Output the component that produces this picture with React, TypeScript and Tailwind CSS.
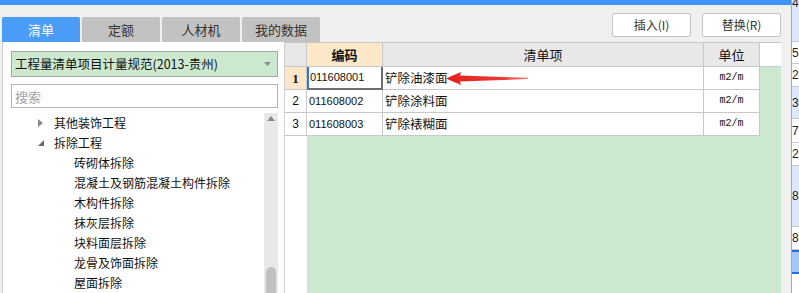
const tabs = ["清单", "定额", "人材机", "我的数据"];

const tree = [
  { label: "其他装饰工程", level: 1, open: false },
  { label: "拆除工程", level: 1, open: true },
  { label: "砖砌体拆除", level: 2 },
  { label: "混凝土及钢筋混凝土构件拆除", level: 2 },
  { label: "木构件拆除", level: 2 },
  { label: "抹灰层拆除", level: 2 },
  { label: "块料面层拆除", level: 2 },
  { label: "龙骨及饰面拆除", level: 2 },
  { label: "屋面拆除", level: 2 },
];

const rows = [
  { code: "011608001", name: "铲除油漆面", unit: "m2/m" },
  { code: "011608002", name: "铲除涂料面", unit: "m2/m" },
  { code: "011608003", name: "铲除裱糊面", unit: "m2/m" },
];

// cut-off cells of the neighbouring sheet on the far right
const strip = [
  { h: "h-[42px]", text: "4", tone: "blue", top: true },
  { h: "h-[22px]", text: "5", tone: "white" },
  { h: "h-[23px]", text: "2", tone: "white" },
  { h: "h-[32px]", text: "3", tone: "blue" },
  { h: "h-[24px]", text: "7", tone: "white" },
  { h: "h-[23px]", text: "2", tone: "white" },
  { h: "h-[61px]", text: "8", tone: "blue" },
  { h: "h-[23px]", text: "8", tone: "white" },
];

function TreeRow({ item }: { item: (typeof tree)[number] }) {
  return (
    <div className="flex h-[20px] items-center">
      {item.level === 1 ? (
        <>
          <span className="ml-[35px] flex w-[16px] items-center">
            {item.open ? (
              <svg width="7" height="7" viewBox="0 0 7 7">
                <polygon points="6,0 6,6 0,6" fill="#6b6b6b" />
              </svg>
            ) : (
              <svg width="6" height="8" viewBox="0 0 6 8">
                <polygon points="0,0 5,4 0,8" fill="#8a8a8a" />
              </svg>
            )}
          </span>
          <span>{item.label}</span>
        </>
      ) : (
        <span className="ml-[71px]">{item.label}</span>
      )}
    </div>
  );
}

export default function App() {
  return (
    <div className="flex h-[293px] w-[799px] overflow-hidden bg-[#f0f0f0] font-['Microsoft_YaHei','Noto_Sans_CJK_SC',sans-serif] text-[12px] leading-none text-[#111]">
      <div className="flex w-[791px] flex-col">
        <div className="h-[5px] bg-[#3f95f6]" />

        <div className="flex h-[37px] pl-[2px] pr-[10px]">
          <div className="flex items-end gap-[2px]">
            {tabs.map((t, i) => (
              <div
                key={t}
                className={`flex h-[25px] w-[78px] items-center justify-center rounded-t-[2px] text-[13px] ${
                  i === 0 ? "bg-[#4b9cf6] text-white" : "bg-[#c2c2c2] text-[#333]"
                }`}
              >
                {t}
              </div>
            ))}
          </div>
          <div className="ml-auto mt-[8px] flex gap-[11px] self-start">
            {["插入(I)", "替换(R)"].map((b) => (
              <div
                key={b}
                className="flex h-[24px] w-[79px] items-center justify-center rounded-[2px] border border-[#c4c4c4] bg-white text-[12px] text-[#333]"
              >
                {b}
              </div>
            ))}
          </div>
        </div>

        <div className="flex min-h-0 flex-1 pl-[2px] pr-[10px]">
          {/* left: spec tree */}
          <div className="flex w-[283px] flex-col border-x border-[#cfcfcf] bg-white">
            <div className="ml-[8px] mt-[9px] flex h-[26px] w-[267px] items-center border border-[#a9a9a9] bg-[#cce8cf] pl-[3px] pr-[6px] text-[12.5px]">
              <span>工程量清单项目计量规范(2013-贵州)</span>
              <svg className="ml-auto" width="7" height="4" viewBox="0 0 7 4">
                <polygon points="0,0 7,0 3.5,4" fill="#8c8c8c" />
              </svg>
            </div>
            <div className="ml-[8px] mt-[7px] flex h-[24px] w-[267px] items-center border border-[#b4b4b4] bg-white pl-[3px] text-[13px] text-[#a3a3a3]">
              搜索
            </div>
            <div className="mt-[5px] flex min-h-0 flex-1">
              <div className="flex-1 overflow-hidden">
                {tree.map((item) => (
                  <TreeRow key={item.label} item={item} />
                ))}
              </div>
              <div className="mr-[6px] flex w-[14px] flex-col items-center bg-[#e8e8e8]">
                <svg className="mt-[3px]" width="8" height="5" viewBox="0 0 8 5">
                  <polygon points="0,5 8,5 4,0" fill="#8a8a8a" />
                </svg>
                <div className="mt-auto h-[26px] w-[10px] rounded-t-[5px] bg-[#c1c1c1]" />
              </div>
            </div>
          </div>

          {/* right: item grid */}
          <div className="flex flex-1 flex-col border-t border-[#c8c8c8] bg-white">
            <div className="flex h-[24px] border-b border-[#c8c8c8] text-[13px]">
              <div className="w-[22px] border-r border-[#c8c8c8] bg-[#e8e8e8]" />
              <div className="flex w-[76px] items-center justify-center border-r border-[#c8c8c8] bg-[#fde7c9] font-bold">
                编码
              </div>
              <div className="flex w-[321px] items-center justify-center border-r border-[#c8c8c8] bg-[#e8e8e8]">
                清单项
              </div>
              <div className="flex w-[56px] items-center justify-center border-r border-[#c8c8c8] bg-[#e8e8e8]">
                单位
              </div>
              <div className="flex-1 bg-white" />
            </div>

            {rows.map((r, i) => (
              <div key={r.code} className="flex h-[23px]">
                <div
                  className={`flex w-[22px] items-center justify-center border-b border-r border-[#c8c8c8] ${
                    i === 0
                      ? "bg-[#fde5c8] font-['Liberation_Serif',serif] text-[13px] font-bold"
                      : "font-['Liberation_Sans',sans-serif] text-[12px]"
                  }`}
                >
                  {i + 1}
                </div>
                <div
                  className={`flex w-[76px] items-center font-['Liberation_Sans',sans-serif] text-[11px] ${
                    i === 0
                      ? "border-b-2 border-l-2 border-r-2 border-[#6e6e6e] border-l-[#2a78e4] pl-[1px]"
                      : "border-b border-r border-[#c8c8c8] pl-[2px]"
                  }`}
                >
                  {r.code}
                </div>
                <div className="relative flex w-[321px] items-center border-b border-r border-[#c8c8c8] pl-[2px] text-[12.5px]">
                  {r.name}
                  {i === 0 && (
                    <svg
                      className="absolute left-[63px] top-[4px]"
                      width="84"
                      height="15"
                      viewBox="0 0 84 15"
                    >
                      <defs>
                        <linearGradient id="arw" x1="0" x2="1" y1="0" y2="0">
                          <stop offset="0" stopColor="#e41f1c" />
                          <stop offset="0.7" stopColor="#ea3a36" />
                          <stop offset="1" stopColor="#f27c78" />
                        </linearGradient>
                      </defs>
                      <polygon
                        points="0,7.5 15,1 14,4.6 82,6.8 82,8 14,10.4 15,14"
                        fill="url(#arw)"
                      />
                    </svg>
                  )}
                </div>
                <div className="flex w-[56px] items-center justify-center border-b border-r border-[#c8c8c8] font-['Liberation_Mono',monospace] text-[10px]">
                  {r.unit}
                </div>
                <div className="flex-1 bg-[#cce8cf]" />
              </div>
            ))}

            <div className="flex flex-1">
              <div className="w-[22px] bg-white" />
              <div className="flex-1 bg-[#cce8cf]" />
            </div>
          </div>
        </div>
      </div>

      <div className="w-px bg-[#a8a8a8]" />

      <div className="flex w-[7px] flex-col overflow-hidden font-['Liberation_Sans',sans-serif] text-[12px] text-[#222]">
        {strip.map((c, i) => (
          <div
            key={i}
            className={`flex ${c.h} ${c.top ? "items-start" : "items-center"} border-b border-[#c8c8c8] ${
              c.tone === "blue" ? "bg-[#dce8fd]" : "bg-white"
            }`}
          >
            <span className={c.top ? "-mt-[3px]" : ""}>{c.text}</span>
          </div>
        ))}
        <div className="h-[24px] border-y-2 border-[#1f6fe6] bg-[#a1c7f9]" />
        <div className="flex-1 bg-white" />
      </div>
    </div>
  );
}
